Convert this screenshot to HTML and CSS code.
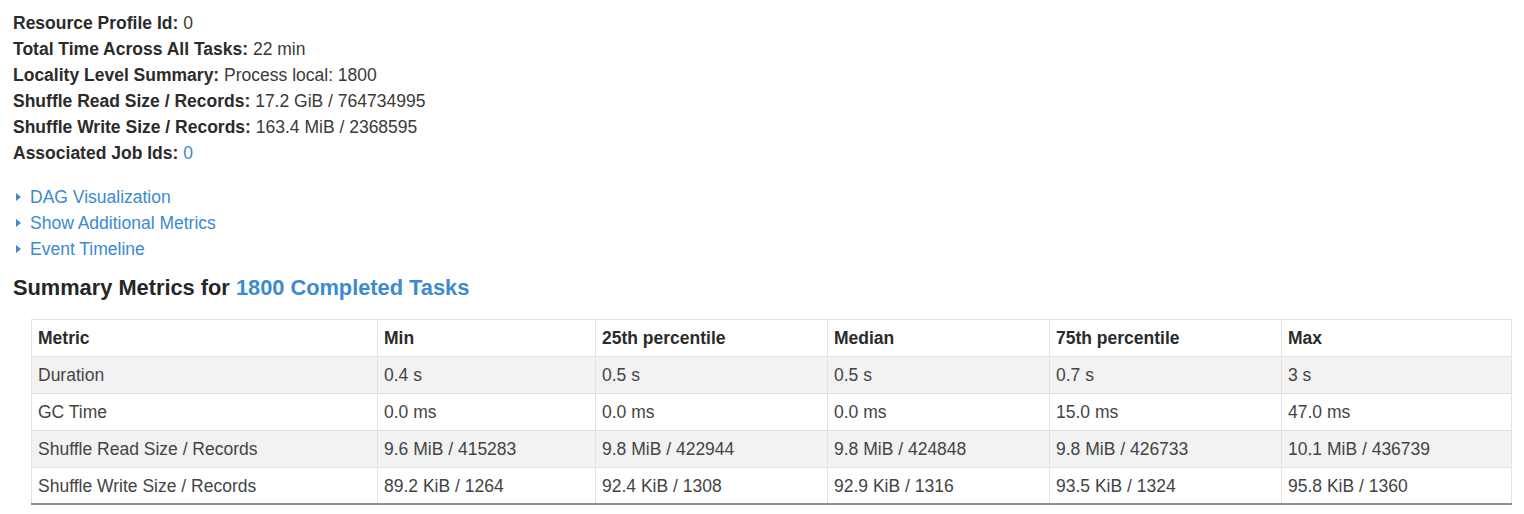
FILE: index.html
```html
<!DOCTYPE html>
<html lang="en">
<head>
    <meta charset="UTF-8">
    <meta name="viewport" content="width=device-width, initial-scale=1.0">
    <title>Stage Details</title>
    <link rel="stylesheet" href="styles.css">
</head>
<body>
    <ul class="summary">
        <li><strong>Resource Profile Id:</strong> 0</li>
        <li><strong>Total Time Across All Tasks:</strong> 22 min</li>
        <li><strong>Locality Level Summary:</strong> Process local: 1800</li>
        <li><strong>Shuffle Read Size / Records:</strong> 17.2 GiB / 764734995</li>
        <li><strong>Shuffle Write Size / Records:</strong> 163.4 MiB / 2368595</li>
        <li><strong>Associated Job Ids:</strong> <a href="#">0</a></li>
    </ul>

    <ul class="toggles">
        <li><span class="arrow"></span><a href="#">DAG Visualization</a></li>
        <li><span class="arrow"></span><a href="#">Show Additional Metrics</a></li>
        <li><span class="arrow"></span><a href="#">Event Timeline</a></li>
    </ul>

    <h4 class="section-title">Summary Metrics for <a href="#">1800 Completed Tasks</a></h4>

    <table class="metrics">
        <colgroup>
            <col style="width: 346px">
            <col style="width: 218px">
            <col style="width: 232px">
            <col style="width: 222px">
            <col style="width: 232px">
            <col>
        </colgroup>
        <thead>
            <tr>
                <th>Metric</th>
                <th>Min</th>
                <th>25th percentile</th>
                <th>Median</th>
                <th>75th percentile</th>
                <th>Max</th>
            </tr>
        </thead>
        <tbody>
            <tr>
                <td>Duration</td>
                <td>0.4 s</td>
                <td>0.5 s</td>
                <td>0.5 s</td>
                <td>0.7 s</td>
                <td>3 s</td>
            </tr>
            <tr>
                <td>GC Time</td>
                <td>0.0 ms</td>
                <td>0.0 ms</td>
                <td>0.0 ms</td>
                <td>15.0 ms</td>
                <td>47.0 ms</td>
            </tr>
            <tr>
                <td>Shuffle Read Size / Records</td>
                <td>9.6 MiB / 415283</td>
                <td>9.8 MiB / 422944</td>
                <td>9.8 MiB / 424848</td>
                <td>9.8 MiB / 426733</td>
                <td>10.1 MiB / 436739</td>
            </tr>
            <tr>
                <td>Shuffle Write Size / Records</td>
                <td>89.2 KiB / 1264</td>
                <td>92.4 KiB / 1308</td>
                <td>92.9 KiB / 1316</td>
                <td>93.5 KiB / 1324</td>
                <td>95.8 KiB / 1360</td>
            </tr>
        </tbody>
    </table>
</body>
</html>
```

FILE: styles.css
```css
body {
    font-family: "Liberation Sans", Arial, sans-serif;
    font-size: 17.5px;
    color: #3a3a3a;
    margin: 0;
    padding: 10px 13px;
    background-color: #fff;
}
a {
    color: #3b8ad2;
    text-decoration: none;
}
ul {
    list-style: none;
    margin: 0;
    padding: 0;
}
.summary li {
    line-height: 26px;
}
.summary strong {
    color: #2b2b2b;
}
.toggles {
    margin-top: 18px;
}
.toggles li {
    line-height: 26px;
    display: flex;
    align-items: center;
}
.arrow {
    width: 0;
    height: 0;
    margin: 0 9px 0 3px;
    border-top: 4px solid transparent;
    border-bottom: 4px solid transparent;
    border-left: 5px solid #3b8ad2;
}
.section-title {
    font-size: 21.8px;
    line-height: 26px;
    margin: 13px 0 18px;
    color: #262626;
}
.metrics {
    width: 1481px;
    margin-left: 18px;
    border-collapse: collapse;
    table-layout: fixed;
}
.metrics th, .metrics td {
    border: 1px solid #e2e2e2;
    padding: 8px 6px;
    line-height: 20px;
    text-align: left;
}
.metrics th {
    color: #2b2b2b;
}
.metrics td {
    color: #444;
}
.metrics tbody tr:nth-child(odd) {
    background-color: #f2f2f2;
}
.metrics tbody tr:last-child td {
    padding-bottom: 7px;
    border-bottom: 2px solid #8f8f8f;
}
```
